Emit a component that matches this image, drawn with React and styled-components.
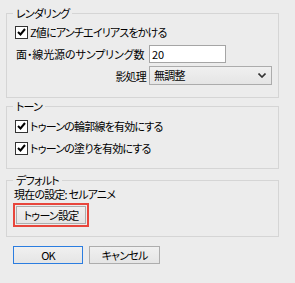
import React from 'react';
import styled, { createGlobalStyle } from 'styled-components';

const Global = createGlobalStyle`
  html, body { margin: 0; padding: 0; background: #ececec; }
  body {
    font-family: "Noto Sans CJK JP", "Noto Sans", sans-serif;
    font-size: 11px;
    letter-spacing: -0.8px;
    color: #000;
    font-feature-settings: "palt";
  }
  * { box-sizing: border-box; }
`;

const Page = styled.div`
  width: 295px;
  height: 283px;
  padding: 6px 16px 0 6px;
  display: flex;
  flex-direction: column;
`;

const Group = styled.fieldset`
  margin: 0 0 ${(p) => p.$gap || 0}px 0;
  padding: 0 8px ${(p) => p.$pb}px ${(p) => (p.$pl != null ? p.$pl : 8)}px;
  border: 1px solid #d5d5d5;
  min-width: 0;
  display: flex;
  flex-direction: column;
  align-items: flex-start;
`;

const Legend = styled.legend`
  padding: 0 3px;
  margin-left: ${(p) => (p.$ml != null ? p.$ml : -2)}px;
  height: 14px;
  line-height: 14px;
`;

const CheckRow = styled.label`
  display: flex;
  align-items: center;
  gap: 2px;
  height: 16px;
  line-height: 16px;
  margin-top: ${(p) => p.$mt}px;
  white-space: nowrap;
`;

const Box = styled.span`
  width: 13px;
  height: 13px;
  border: 1px solid #333;
  background: #fff;
  display: inline-flex;
  align-items: center;
  justify-content: center;
  flex: none;
`;

const FieldRow = styled.div`
  display: grid;
  grid-template-columns: 131px auto;
  column-gap: 3px;
  align-items: center;
  margin-top: ${(p) => p.$mt}px;
  white-space: nowrap;
`;

const FieldLabel = styled.span`
  text-align: ${(p) => p.$align || 'right'};
  padding-left: ${(p) => (p.$align === 'left' ? 1 : 0)}px;
  letter-spacing: ${(p) => (p.$align === 'left' ? '-0.1px' : 'inherit')};
  line-height: 14px;
`;

const TextInput = styled.div`
  width: 77px;
  height: 18px;
  border: 1px solid #a5a5a5;
  background: #fff;
  padding-left: 2px;
  line-height: 16px;
  letter-spacing: 0;
`;

const Select = styled.div`
  width: 123px;
  height: 19px;
  border: 1px solid #acacac;
  background: linear-gradient(#f0f0f0, #e5e5e5);
  display: flex;
  align-items: center;
  justify-content: space-between;
  padding: 0 5px 0 4px;
  line-height: 17px;
`;

const Text = styled.div`
  line-height: 14px;
  height: 14px;
  margin-left: 1px;
  white-space: nowrap;
`;

const Highlight = styled.div`
  margin-top: 2px;
  border: 2px solid #e8463c;
  padding: 1px;
`;

const Button = styled.button`
  width: ${(p) => p.$w}px;
  height: 18px;
  padding: 0;
  margin: 0;
  font: inherit;
  letter-spacing: inherit;
  color: #000;
  line-height: 16px;
  border: 1px solid ${(p) => (p.$default ? '#2b7de0' : '#adadad')};
  background: linear-gradient(#f0f0f0, #e5e5e5);
  display: flex;
  align-items: center;
  justify-content: center;
`;

const ButtonRow = styled.div`
  display: flex;
  gap: 6px;
  margin: 9px 0 0 7px;
`;

const Check = () => (
  <Box>
    <svg width="9" height="8" viewBox="0 0 9 8">
      <path d="M1 4 L3.5 6.5 L8 1" fill="none" stroke="#000" strokeWidth="2" />
    </svg>
  </Box>
);

export default function App() {
  return (
    <>
      <Global />
      <Page>
        <Group $pb={12} $gap={1}>
          <Legend>レンダリング</Legend>
          <CheckRow $mt={4}>
            <Check />
            <span>Z値にアンチエイリアスをかける</span>
          </CheckRow>
          <FieldRow $mt={5}>
            <FieldLabel $align="left">面・線光源のサンプリング数</FieldLabel>
            <TextInput>20</TextInput>
          </FieldRow>
          <FieldRow $mt={3}>
            <FieldLabel>影処理</FieldLabel>
            <Select>
              <span>無調整</span>
              <svg width="8" height="5" viewBox="0 0 8 5">
                <path d="M0.5 0.5 L4 4 L7.5 0.5" fill="none" stroke="#333" strokeWidth="1.6" />
              </svg>
            </Select>
          </FieldRow>
        </Group>

        <Group $pb={12} $gap={4}>
          <Legend>トーン</Legend>
          <CheckRow $mt={5}>
            <Check />
            <span>トゥーンの輪郭線を有効にする</span>
          </CheckRow>
          <CheckRow $mt={6}>
            <Check />
            <span>トゥーンの塗りを有効にする</span>
          </CheckRow>
        </Group>

        <Group $pb={9} $pl={6}>
          <Legend $ml={0}>デフォルト</Legend>
          <Text>現在の設定: セルアニメ</Text>
          <Highlight>
            <Button $w={70}>トゥーン設定</Button>
          </Highlight>
        </Group>

        <ButtonRow>
          <Button $w={70} $default>OK</Button>
          <Button $w={71}>キャンセル</Button>
        </ButtonRow>
      </Page>
    </>
  );
}
